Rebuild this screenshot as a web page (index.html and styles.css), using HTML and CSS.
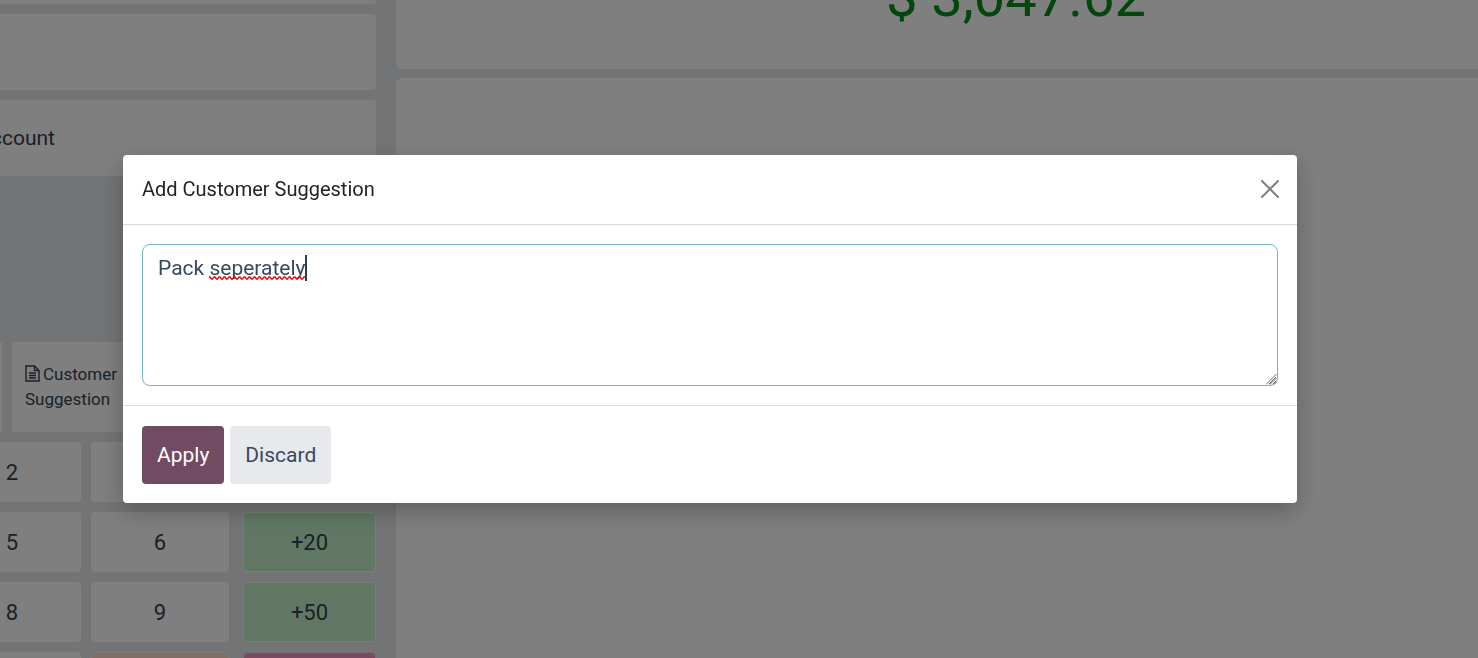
FILE: index.html
```
<!DOCTYPE html>
<html lang="en">
<head>
    <meta charset="utf-8">
    <title>Payment</title>
    <link rel="stylesheet" href="styles.css">
</head>
<body>
    <div class="payment-screen">
        <div class="left-pane">
            <div class="methods">
                <div class="method method-first"></div>
                <div class="method"></div>
                <div class="method"><span class="method-name">ccount</span></div>
            </div>
            <div class="actions">
                <button type="button" class="action action-cut" aria-label="Customer"></button>
                <button type="button" class="action">
                    <svg class="file-icon" viewBox="0 0 15 17" width="15" height="17" fill="none" stroke="currentColor" stroke-width="1.4">
                        <path d="M1 1h8.500l4.500 4.500v10.500h-13z"/>
                        <path d="M9.500 1v4.500h4.500M4 8h7M4 10.500h7M4 13h7"/>
                    </svg><span class="action-name">Customer</span><br>Suggestion
                </button>
            </div>
            <div class="numpad">
                <button type="button">2</button>
                <button type="button" aria-label="3"></button>
                <button type="button" class="plus" aria-label="+10"></button>
                <button type="button">5</button>
                <button type="button">6</button>
                <button type="button" class="plus">+20</button>
                <button type="button">8</button>
                <button type="button">9</button>
                <button type="button" class="plus">+50</button>
                <button type="button" aria-label="0"></button>
                <button type="button" class="decimal" aria-label="Decimal"></button>
                <button type="button" class="delete" aria-label="Delete"></button>
            </div>
        </div>
        <div class="right-pane">
            <div class="total">$ 3,047.62</div>
            <div class="lines"></div>
        </div>
    </div>

    <div class="backdrop">
        <div class="modal" role="dialog" aria-labelledby="modalTitle">
            <div class="modal-header">
                <h4 id="modalTitle">Add Customer Suggestion</h4>
                <button type="button" class="close" aria-label="Close">
                    <svg viewBox="0 0 18 18" width="18" height="18" stroke="currentColor" stroke-width="2" stroke-linecap="round">
                        <path d="M1 1l16 16M17 1L1 17"/>
                    </svg>
                </button>
            </div>
            <div class="modal-body">
                <textarea id="note" aria-label="Customer suggestion" spellcheck="false">Pack seperately</textarea>
                <svg class="squiggle" width="96" height="4">
                    <defs>
                        <pattern id="wave" width="5" height="4" patternUnits="userSpaceOnUse">
                            <path d="M-1 1H1L2.500 3H3.500L5 1H6" fill="none" stroke="#f00000" stroke-width="1.3"/>
                        </pattern>
                    </defs>
                    <rect width="96" height="4" fill="url(#wave)"/>
                </svg>
                <span class="caret"></span>
                <svg class="grip" width="11" height="11" stroke="#6c6c6c" stroke-width="1">
                    <path d="M0 10.500L10.500 0M4 10.500L10.500 4M8 10.500L10.500 8"/>
                </svg>
            </div>
            <div class="modal-footer">
                <button type="button" class="btn btn-primary">Apply</button>
                <button type="button" class="btn btn-secondary">Discard</button>
            </div>
        </div>
    </div>
</body>
</html>
```
FILE: styles.css
```
* {
    box-sizing: border-box;
}
body {
    margin: 0;
    height: 100vh;
    overflow: hidden;
    font-family: Roboto, sans-serif;
    font-size: 21px;
    color: #374151;
    background: #e7e9ed;
}
button, textarea {
    font-family: inherit;
    font-size: 21px;
    color: inherit;
    margin: 0;
}
button {
    border: none;
    cursor: pointer;
}
.payment-screen {
    display: flex;
    gap: 20px;
    height: 100vh;
    overflow: hidden;
}

/* left side */
.left-pane {
    flex: 0 0 376px;
    min-width: 0;
    display: flex;
    flex-direction: column;
}
.methods {
    display: flex;
    flex-direction: column;
    gap: 10px;
    margin-bottom: 166px;
}
.method {
    display: flex;
    align-items: center;
    height: 76px;
    background: #fff;
    border-radius: 0 4px 4px 0;
}
.method-first {
    height: 4px;
}
.method-name {
    display: flex;
    justify-content: flex-end;
    width: 55px;
}
.actions {
    display: flex;
    gap: 10px;
    margin-bottom: 10px;
}
.action {
    flex: 1;
    height: 90px;
    padding: 0 13px;
    text-align: left;
    font-size: 17px;
    line-height: 25px;
    background: #fff;
}
.action-cut {
    flex: 0 0 2px;
    padding: 0;
    border-radius: 0 4px 4px 0;
}
.action-name {
    margin-left: 3px;
}
.file-icon {
    vertical-align: -2px;
}
.numpad {
    display: grid;
    grid-template-columns: 138px 138px 137px;
    grid-auto-rows: 60px;
    gap: 10px;
    justify-content: end;
}
.numpad button {
    padding: 0;
    font-size: 22px;
    background: #fff;
    border-radius: 4px;
}
.numpad .plus {
    margin-left: 4px;
    background: #c0f0c6;
    border: 1px solid #f4fff4;
}
.numpad .decimal {
    background: #ffdcc8;
    border: 1px solid #fff0e6;
}
.numpad .delete {
    margin-left: 4px;
    background: #f096c0;
    border: 1px solid #f8d8e8;
}

/* right side */
.right-pane {
    flex: 1;
    min-width: 0;
    display: flex;
    flex-direction: column;
    gap: 9px;
}
.total {
    display: flex;
    align-items: flex-end;
    justify-content: center;
    height: 69px;
    padding-bottom: 40px;
    margin-right: -158px;
    font-size: 56px;
    line-height: 64px;
    color: #088f1a;
    background: #fff;
    border-radius: 0 0 0 6px;
}
.lines {
    flex: 1;
    background: #fff;
    border-radius: 6px 0 0 0;
}

/* dialog */
.backdrop {
    position: fixed;
    inset: 0;
    display: flex;
    align-items: center;
    padding: 0 181px 0 123px;
    background: rgba(0, 0, 0, 0.5);
}
.modal {
    flex: 1;
    background: #fff;
    border-radius: 4px;
    box-shadow: 0 8px 24px rgba(0, 0, 0, 0.25);
}
.modal-header {
    display: flex;
    align-items: center;
    justify-content: space-between;
    height: 70px;
    padding: 0 18px 1px 19px;
    border-bottom: 1px solid #d8dadd;
}
.modal-header h4 {
    margin: 0;
    font-size: 20px;
    font-weight: 400;
    line-height: 24px;
    color: #212529;
}
.close {
    display: flex;
    padding: 0;
    color: #808085;
    background: none;
}
.modal-body {
    position: relative;
    padding: 19px;
}
.modal-body textarea {
    display: block;
    width: 100%;
    height: 142px;
    padding: 8px 15px;
    line-height: 30px;
    color: #374960;
    border: 1px solid #71b5bf;
    border-radius: 8px;
    outline: none;
    resize: vertical;
}
.squiggle {
    position: absolute;
    top: 51px;
    left: 86px;
}
.caret {
    position: absolute;
    top: 30px;
    left: 182px;
    width: 2px;
    height: 26px;
    background: #2c3e57;
}
.grip {
    position: absolute;
    right: 20px;
    bottom: 20px;
    pointer-events: none;
}
.modal-footer {
    display: flex;
    gap: 6px;
    padding: 20px 19px 19px;
    border-top: 1px solid #d8dadd;
}
.btn {
    height: 58px;
    padding: 0 15px;
    border-radius: 4px;
}
.btn-primary {
    color: #fff;
    background: #714b62;
}
.btn-secondary {
    color: #374960;
    background: #e7e9ed;
}
```
